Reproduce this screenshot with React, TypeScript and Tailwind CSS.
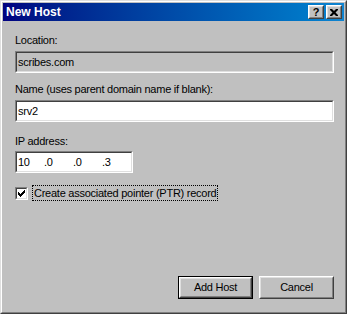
import React from "react";

function Sunken({ className = "", children }: { className?: string; children?: React.ReactNode }) {
  return (
    <div className={`border border-t-[#808080] border-l-[#808080] border-r-white border-b-white ${className}`}>
      <div className="h-full w-full border border-t-[#404040] border-l-[#404040] border-r-[#dfdfdf] border-b-[#dfdfdf]">
        {children}
      </div>
    </div>
  );
}

function Raised({ className = "", children }: { className?: string; children?: React.ReactNode }) {
  return (
    <div className={`border border-t-white border-l-white border-r-[#404040] border-b-[#404040] ${className}`}>
      <div className="h-full w-full border border-t-[#dfdfdf] border-l-[#dfdfdf] border-r-[#808080] border-b-[#808080] bg-[#c0c0c0] flex items-center justify-center">
        {children}
      </div>
    </div>
  );
}

const CHECK = [
  "......X",
  ".....XX",
  "X...XXX",
  "XX.XXX.",
  "XXXXX..",
  ".XXX...",
  "..X....",
];

export default function App() {
  return (
    <div className="w-[347px] h-[314px] bg-[#c0c0c0] text-black text-[11px] leading-[13px] tracking-[-0.25px] font-['Liberation_Sans',Arial,sans-serif]">
      <div className="h-full w-full border border-t-[#dfdfdf] border-l-[#dfdfdf] border-r-[#404040] border-b-[#404040]">
        <div className="h-full w-full border border-t-white border-l-white border-r-[#808080] border-b-[#808080] p-px flex flex-col">
          {/* Title bar */}
          <div className="h-[18px] flex items-center bg-gradient-to-r from-[#000080] to-[#1084d0] pl-[3px] pr-[2px]">
            <span className="text-white font-bold text-[12px] tracking-normal leading-[14px]">New Host</span>
            <div className="flex-1" />
            <Raised className="w-[16px] h-[14px]">
              <span className="font-bold text-[11px] leading-[10px] tracking-normal">?</span>
            </Raised>
            <Raised className="w-[16px] h-[14px] ml-[2px]">
              <svg width="8" height="7" viewBox="0 0 8 7">
                <path d="M0 0h2l2 2 2-2h2v1L5.5 3.5 8 6v1H6L4 5 2 7H0V6l2.5-2.5L0 1z" fill="#000" />
              </svg>
            </Raised>
          </div>

          {/* Body */}
          <div className="flex-1 flex flex-col pl-[12px] pr-[10px] pt-[13px] pb-[12px]">
            <div className="h-[13px]">Location:</div>
            <Sunken className="mt-[4px] h-[22px] w-full">
              <div className="h-full flex items-center pl-[1px] bg-[#c0c0c0]">scribes.com</div>
            </Sunken>

            <div className="h-[13px] mt-[10px]">Name (uses parent domain name if blank):</div>
            <Sunken className="mt-[4px] h-[22px] w-full">
              <div className="h-full flex items-center pl-[1px] bg-white">srv2</div>
            </Sunken>

            <div className="h-[13px] mt-[13px]">IP address:</div>
            <Sunken className="mt-[3px] h-[22px] w-[118px]">
              <div className="h-full flex items-center bg-white pl-[1px]">
                <span className="w-[26px]">10</span>
                <span className="w-[29px]">.0</span>
                <span className="w-[29px]">.0</span>
                <span>.3</span>
              </div>
            </Sunken>

            <div className="mt-[12px] h-[16px] flex items-center">
              <Sunken className="w-[13px] h-[13px]">
                <div className="h-full w-full bg-white flex items-center justify-center">
                  <svg width="7" height="7" viewBox="0 0 7 7" shapeRendering="crispEdges">
                    {CHECK.flatMap((row, y) =>
                      row.split("").map((c, x) =>
                        c === "X" ? <rect key={`${x}-${y}`} x={x} y={y} width="1" height="1" fill="#000" /> : null
                      )
                    )}
                  </svg>
                </div>
              </Sunken>
              <div className="ml-[4px] h-[16px] border border-dotted border-black px-[1px] flex items-center">
                Create associated pointer (PTR) record
              </div>
            </div>

            <div className="flex-1" />

            <div className="flex justify-end gap-[6px]">
              <div className="border border-black w-[75px] h-[23px]">
                <Raised className="w-full h-full">Add Host</Raised>
              </div>
              <Raised className="w-[75px] h-[23px]">Cancel</Raised>
            </div>
          </div>
        </div>
      </div>
    </div>
  );
}
